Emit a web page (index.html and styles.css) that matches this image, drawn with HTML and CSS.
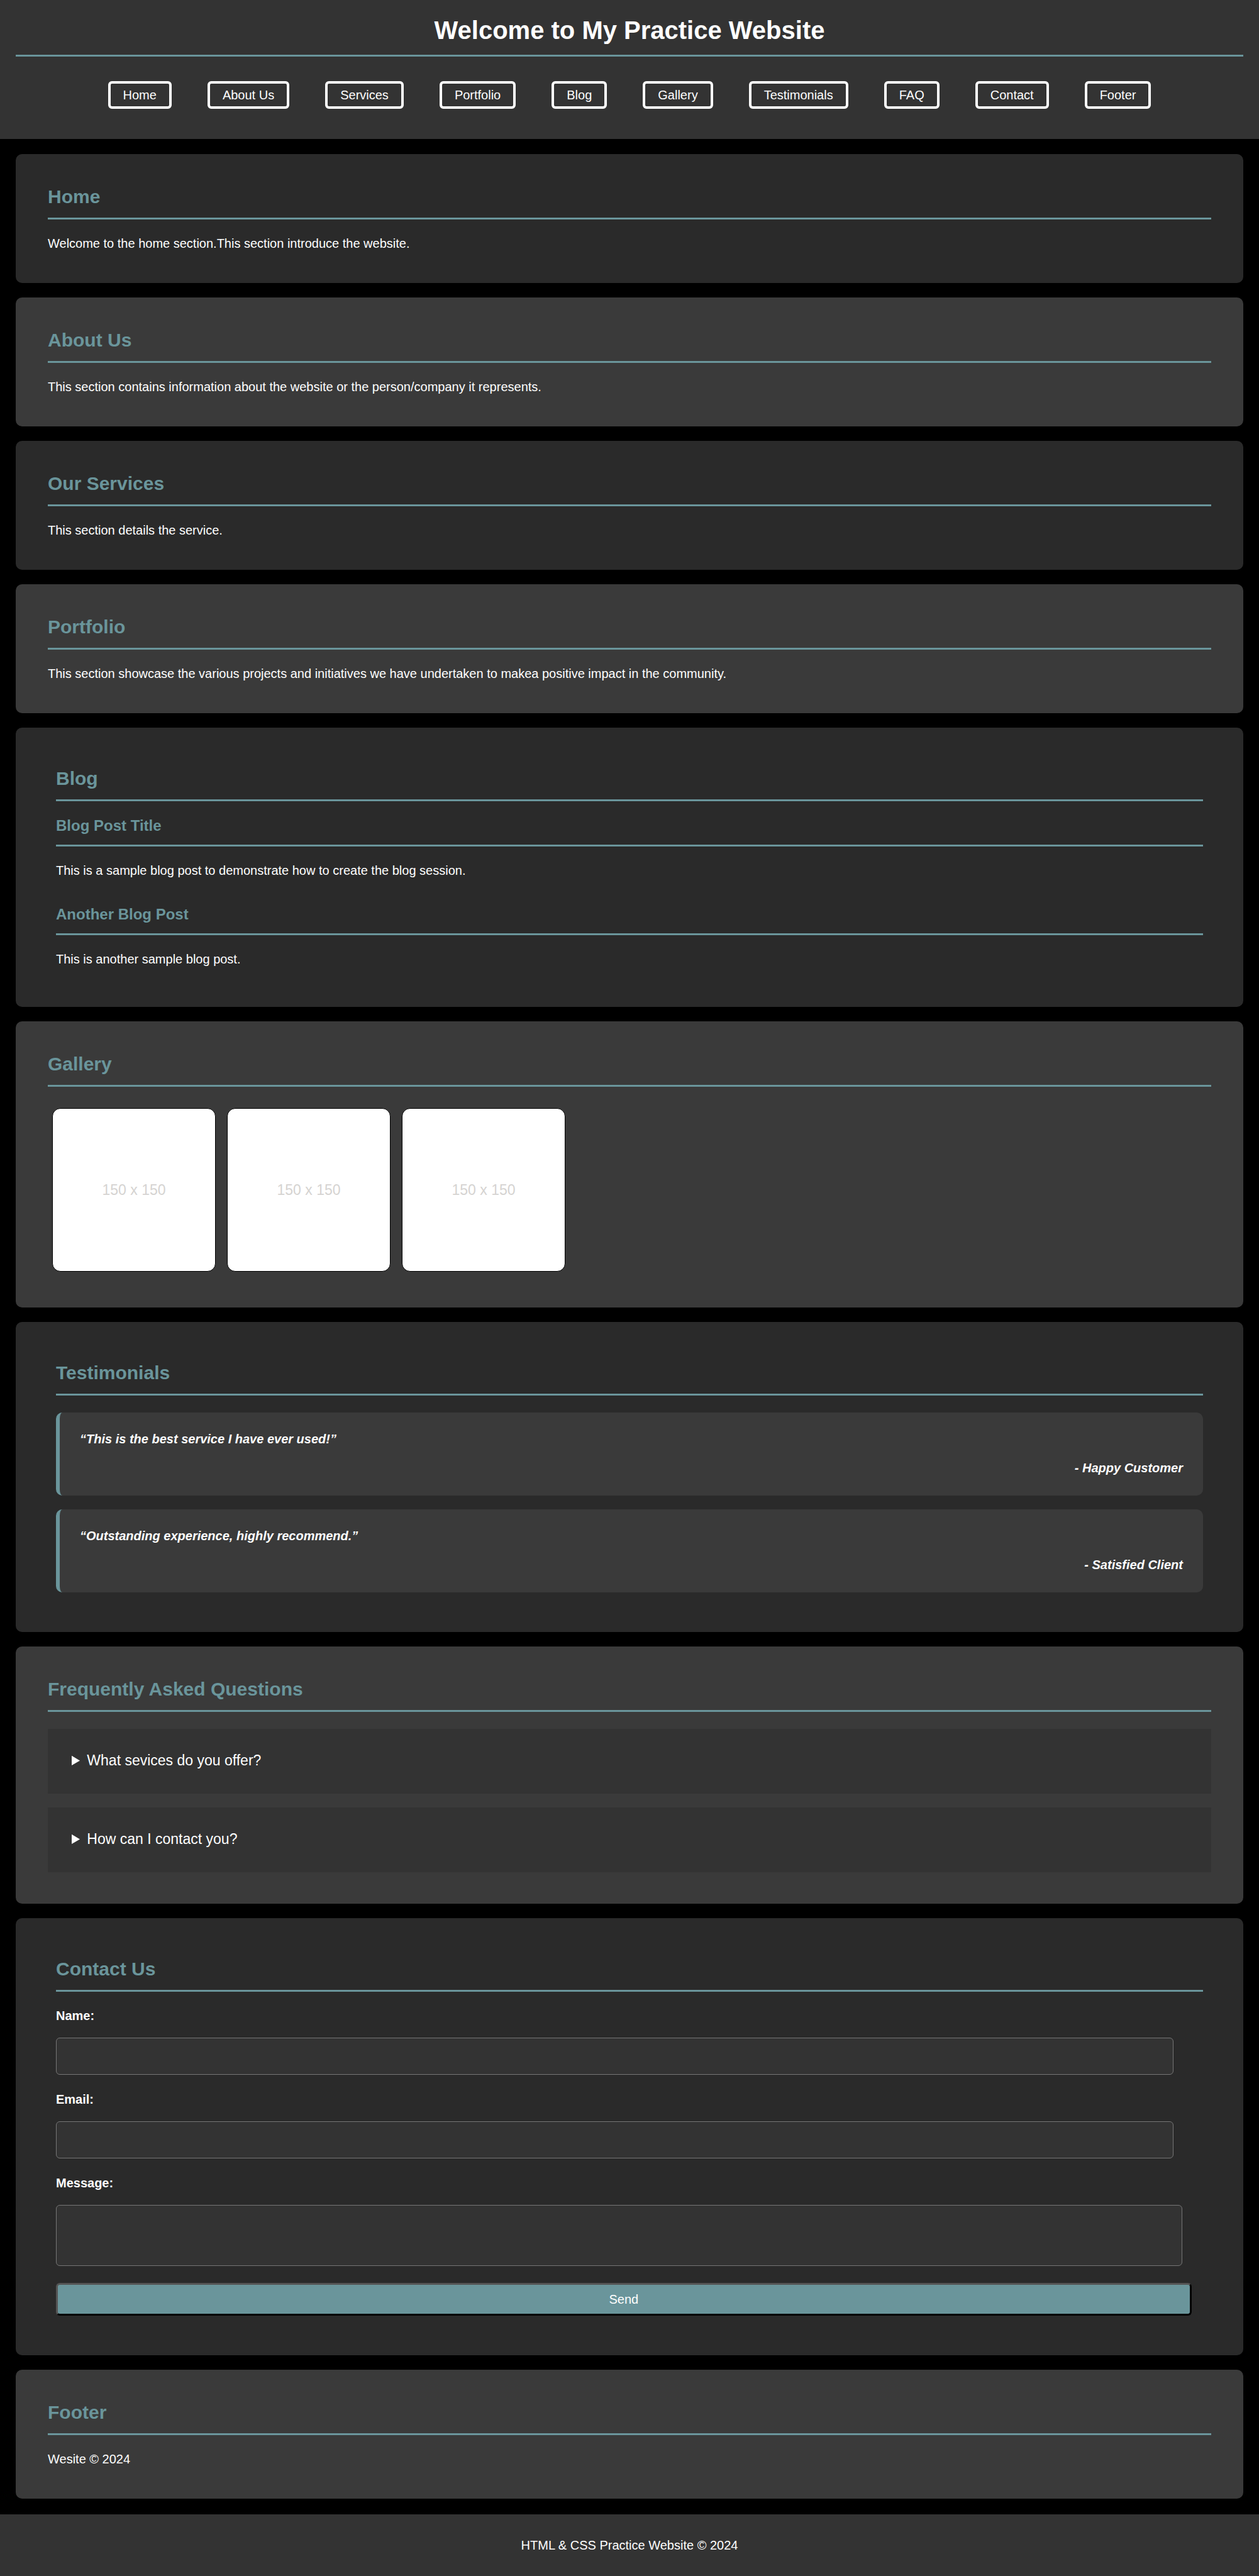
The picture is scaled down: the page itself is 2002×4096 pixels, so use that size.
FILE: index.html
```html
<!DOCTYPE html>
<html lang="en">
<head>
<meta charset="utf-8">
<meta name="viewport" content="width=device-width, initial-scale=1">
<title>My Practice Website</title>
<link rel="stylesheet" href="styles.css">
</head>
<body>
<header class="site-header">
  <h1 class="site-title">Welcome to My Practice Website</h1>
  <nav class="site-nav">
    <a class="nav-link" href="#home">Home</a>
    <a class="nav-link" href="#about">About Us</a>
    <a class="nav-link" href="#services">Services</a>
    <a class="nav-link" href="#portfolio">Portfolio</a>
    <a class="nav-link" href="#blog">Blog</a>
    <a class="nav-link" href="#gallery">Gallery</a>
    <a class="nav-link" href="#testimonials">Testimonials</a>
    <a class="nav-link" href="#faq">FAQ</a>
    <a class="nav-link" href="#contact">Contact</a>
    <a class="nav-link" href="#footer">Footer</a>
  </nav>
</header>

<main class="content">
  <section class="panel dark" id="home">
    <h2>Home</h2>
    <p>Welcome to the home section.This section introduce the website.</p>
  </section>

  <section class="panel" id="about">
    <h2>About Us</h2>
    <p>This section contains information about the website or the person/company it represents.</p>
  </section>

  <section class="panel dark" id="services">
    <h2>Our Services</h2>
    <p>This section details the service.</p>
  </section>

  <section class="panel" id="portfolio">
    <h2>Portfolio</h2>
    <p>This section showcase the various projects and initiatives we have undertaken to makea positive impact in the community.</p>
  </section>

  <section class="panel dark inset" id="blog">
    <h2>Blog</h2>
    <div class="posts">
      <article>
        <h3>Blog Post Title</h3>
        <p>This is a sample blog post to demonstrate how to create the blog session.</p>
      </article>
      <article>
        <h3>Another Blog Post</h3>
        <p>This is another sample blog post.</p>
      </article>
    </div>
  </section>

  <section class="panel" id="gallery">
    <h2>Gallery</h2>
    <div class="gallery">
      <div class="thumb">150 x 150</div>
      <div class="thumb">150 x 150</div>
      <div class="thumb">150 x 150</div>
    </div>
  </section>

  <section class="panel dark inset" id="testimonials">
    <h2>Testimonials</h2>
    <div class="stack">
      <blockquote class="quote">
        <p>“This is the best service I have ever used!”</p>
        <footer>- Happy Customer</footer>
      </blockquote>
      <blockquote class="quote">
        <p>“Outstanding experience, highly recommend.”</p>
        <footer>- Satisfied Client</footer>
      </blockquote>
    </div>
  </section>

  <section class="panel" id="faq">
    <h2>Frequently Asked Questions</h2>
    <div class="stack">
      <details class="question">
        <summary>What sevices do you offer?</summary>
      </details>
      <details class="question">
        <summary>How can I contact you?</summary>
      </details>
    </div>
  </section>

  <section class="panel dark inset" id="contact">
    <h2>Contact Us</h2>
    <form class="contact-form">
      <label for="name">Name:</label>
      <input class="field" type="text" id="name" name="name">
      <label for="email">Email:</label>
      <input class="field" type="email" id="email" name="email">
      <label for="message">Message:</label>
      <textarea class="field message" id="message" name="message"></textarea>
      <button class="send" type="submit">Send</button>
    </form>
  </section>

  <section class="panel" id="footer">
    <h2>Footer</h2>
    <p>Wesite © 2024</p>
  </section>
</main>

<footer class="site-footer">HTML &amp; CSS Practice Website © 2024</footer>
</body>
</html>
```
FILE: styles.css
```css
body {
  margin: 0;
  background: #000;
  color: #fff;
  font: 20px/32px "Liberation Sans", Arial, sans-serif;
}

h1, h2, h3, p, blockquote {
  margin: 0;
}

/* Header */
.site-header {
  padding: 16px 25px 48px;
  background: #333;
}

.site-title {
  padding-bottom: 7px;
  border-bottom: 3px solid #6a959b;
  font-size: 40px;
  line-height: 64px;
  text-align: center;
}

.site-nav {
  display: flex;
  flex-wrap: wrap;
  justify-content: center;
  gap: 16px 57px;
  margin-top: 39px;
}

.nav-link {
  padding: 6px 20px;
  border: 4px solid #fff;
  border-radius: 6px;
  color: #fff;
  line-height: 24px;
  text-decoration: none;
}

/* Panels */
.content {
  display: flex;
  flex-direction: column;
  gap: 23px;
  padding: 24px 25px 25px;
}

.panel {
  padding: 44px 51px 47px;
  border-radius: 10px;
  background: #3a3a3a;
}

.panel.dark {
  background: #2a2a2a;
}

.panel.inset {
  padding: 57px 64px 60px;
}

h2, h3 {
  border-bottom: 3px solid #6a959b;
  color: #6a959b;
}

h2 {
  padding-bottom: 9px;
  font-size: 30px;
  line-height: 48px;
}

h3 {
  padding-bottom: 11px;
  font-size: 24px;
  line-height: 38px;
}

h2 + p, h3 + p {
  margin-top: 22px;
}

/* Blog */
.posts {
  display: flex;
  flex-direction: column;
  gap: 35px;
  margin-top: 20px;
}

/* Gallery */
.gallery {
  display: flex;
  flex-wrap: wrap;
  gap: 18px;
  margin: 34px 7px 10px;
}

.thumb {
  display: flex;
  align-items: center;
  justify-content: center;
  box-sizing: border-box;
  width: 260px;
  height: 260px;
  border: 1px solid #000;
  border-radius: 13px;
  background: #fff;
  color: #d5d3d1;
  font-size: 23px;
}

/* Testimonials and questions */
.stack {
  display: flex;
  flex-direction: column;
  gap: 22px;
  margin: 27px 0 3px;
}

.quote {
  display: flex;
  flex-direction: column;
  gap: 14px;
  padding: 26px 32px 28px;
  border-left: 6px solid #6a959b;
  border-radius: 10px;
  background: #3a3a3a;
  font-style: italic;
  font-weight: bold;
}

.quote footer {
  text-align: right;
}

.question {
  padding: 32px 38px 34px;
  background: #333;
  font-size: 23px;
  line-height: 37px;
}

/* Contact form */
.contact-form {
  display: flex;
  flex-direction: column;
  align-items: flex-start;
  margin: 22px 0 3px;
}

.contact-form label {
  margin-bottom: 19px;
  font-weight: bold;
}

.field {
  width: 96%;
  height: 33px;
  margin: 0 0 23px;
  padding: 12px;
  border: 1px solid #767676;
  border-radius: 6px;
  background: #333;
  color: #fff;
  font: inherit;
}

.message {
  width: 97%;
  height: 75px;
  margin-bottom: 27px;
  padding: 10px;
  resize: none;
}

.send {
  width: 99%;
  padding: 7px;
  border: 3px solid;
  border-color: #555 #000 #000 #555;
  border-radius: 6px;
  background: #6a959b;
  color: #fff;
  font: inherit;
}

/* Footer */
.site-footer {
  padding: 33px 25px;
  background: #333;
  text-align: center;
}
```
